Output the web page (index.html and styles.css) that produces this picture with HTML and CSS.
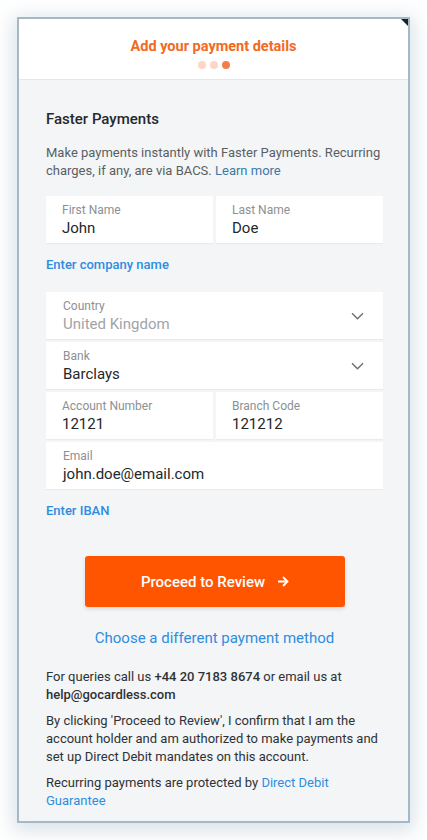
FILE: index.html
```html
<!DOCTYPE html>
<html lang="en">
  <head>
    <meta charset="UTF-8" />
    <meta name="viewport" content="width=device-width, initial-scale=1.0" />
    <title>Add your payment details</title>
    <link rel="stylesheet" href="styles.css">
  </head>
  <body>
    <section class="frame">
      <span class="corner"></span>
      <header class="head">
        <h1 class="head-title">Add your payment details</h1>
        <div class="dots"><span class="dot"></span><span class="dot"></span><span class="dot dot-on"></span></div>
      </header>

      <main class="main">
        <h2 class="scheme">Faster Payments</h2>
        <p class="intro">Make payments instantly with Faster Payments. Recurring charges, if any, are via BACS. <a class="learn">Learn more</a></p>

        <div class="row">
          <div class="field"><div class="label">First Name</div><div class="value">John</div></div>
          <div class="field"><div class="label">Last Name</div><div class="value">Doe</div></div>
        </div>
        <a class="link link-company">Enter company name</a>

        <div class="group">
          <div class="field field-select">
            <div><div class="label">Country</div><div class="value value-off">United Kingdom</div></div>
            <svg class="chev" width="13" height="8" viewBox="0 0 13 8"><path d="M1 1.2l5.5 5.5L12 1.2" fill="none" stroke="#6b6f73" stroke-width="1.4"/></svg>
          </div>
          <div class="field field-select">
            <div><div class="label">Bank</div><div class="value">Barclays</div></div>
            <svg class="chev" width="13" height="8" viewBox="0 0 13 8"><path d="M1 1.2l5.5 5.5L12 1.2" fill="none" stroke="#6b6f73" stroke-width="1.4"/></svg>
          </div>
          <div class="row">
            <div class="field"><div class="label">Account Number</div><div class="value">12121</div></div>
            <div class="field"><div class="label">Branch Code</div><div class="value">121212</div></div>
          </div>
          <div class="field field-wide"><div class="label">Email</div><div class="value">john.doe@email.com</div></div>
        </div>
        <a class="link link-iban">Enter IBAN</a>

        <button class="btn-proceed">Proceed to Review
          <svg width="12" height="11" viewBox="0 0 12 11"><path d="M1 5.5h9.5M6 1l4.5 4.5L6 10" fill="none" stroke="#fff" stroke-width="1.8"/></svg>
        </button>
        <a class="other">Choose a different payment method</a>

        <p class="note">For queries call us <b>+44 20 7183 8674</b> or email us at <b>help@gocardless.com</b></p>
        <p class="note">By clicking 'Proceed to Review', I confirm that I am the account holder and am authorized to make payments and set up Direct Debit mandates on this account.</p>
        <p class="note">Recurring payments are protected by <a class="note-link">Direct Debit Guarantee</a></p>
      </main>
    </section>
  </body>
</html>
```

FILE: styles.css
```css
*,
body {
  margin: 0;
  padding: 0;
  box-sizing: border-box;
}
body {
  background: #fff;
  font-family: Roboto, "Noto Sans", sans-serif;
  color: #2a2d30;
}
a {
  cursor: pointer;
}
.frame {
  position: relative;
  margin: 17px;
  width: 393px;
  height: 806px;
  border: 2px solid #a3b9c9;
  background: #f3f5f7;
  box-shadow: 0 4px 18px 4px rgba(120, 150, 170, 0.28);
  overflow: hidden;
}
.corner {
  position: absolute;
  top: 0;
  right: 0;
  width: 0;
  height: 0;
  border-top: 7px solid #1d1f22;
  border-left: 7px solid transparent;
}
.head {
  background: #fff;
  height: 61px;
  padding-top: 18px;
  border-bottom: 1px solid #e4e7ea;
  text-align: center;
}
.head-title {
  font-size: 14.5px;
  line-height: 20px;
  font-weight: 700;
  color: #f26a22;
}
.dots {
  display: flex;
  justify-content: center;
  gap: 4px;
  margin-top: 4px;
}
.dot {
  width: 8px;
  height: 8px;
  border-radius: 50%;
  background: #fdd7c6;
}
.dot-on {
  background: #f57d4b;
}
.main {
  padding: 29px 25px 0 27px;
}
.scheme {
  font-size: 15px;
  line-height: 20px;
  font-weight: 500;
  color: #26292c;
}
.intro {
  margin-top: 15px;
  font-size: 13px;
  line-height: 18px;
  color: #5b5f63;
}
.learn {
  color: #3b7aa6;
}
.row {
  display: grid;
  grid-template-columns: 1fr 1fr;
  gap: 3px;
}
.intro + .row {
  margin-top: 16px;
}
.field {
  background: #fff;
  height: 47px;
  padding: 6px 16px 0;
  box-shadow: 0 1px 1px rgba(0, 0, 0, 0.04);
}
.field-select,
.field-wide {
  padding-left: 17px;
}
.field-select {
  display: flex;
  justify-content: space-between;
  align-items: center;
  padding-top: 0;
  padding-right: 19px;
}
.label {
  font-size: 12px;
  line-height: 16px;
  color: #8c9094;
}
.value {
  font-size: 15px;
  line-height: 20px;
  color: #24272a;
}
.value-off {
  color: #a0a4a8;
}
.group {
  display: grid;
  gap: 3px;
  margin-top: 18px;
}
.link {
  display: block;
  font-size: 13px;
  line-height: 18px;
  font-weight: 500;
  color: #2e8ddf;
  margin-top: 13px;
}
.btn-proceed {
  display: flex;
  align-items: center;
  justify-content: center;
  gap: 12px;
  width: 260px;
  height: 51px;
  margin: 36px 0 0 39px;
  background: #ff5500;
  border: none;
  border-radius: 3px;
  box-shadow: 0 2px 4px rgba(0, 0, 0, 0.12);
  color: #fff;
  font-family: inherit;
  font-size: 15px;
  font-weight: 500;
}
.other {
  display: block;
  margin-top: 21px;
  text-align: center;
  font-size: 15px;
  line-height: 20px;
  color: #2e8ddf;
}
.note {
  font-size: 13px;
  line-height: 18px;
  color: #2f3235;
  margin-top: 8px;
}
.other + .note {
  margin-top: 20px;
}
.note b {
  font-weight: 500;
}
.note-link {
  color: #2e8ddf;
}
```
